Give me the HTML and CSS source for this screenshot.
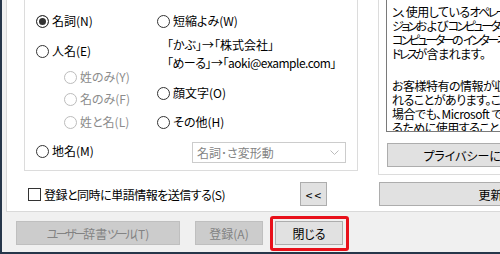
FILE: index.html
```html
<!DOCTYPE html>
<html lang="ja">
<head>
<meta charset="utf-8">
<link rel="stylesheet" href="styles.css">
</head>
<body>
<div class="window">
  <div class="page">
    <div class="left">
      <div class="group">
        <div class="col col-a">
          <div class="opt gap-a1"><span class="radio checked"></span>名詞(N)</div>
          <div class="opt gap-a2"><span class="radio"></span>人名(E)</div>
          <div class="opt sub disabled gap-a3"><span class="radio"></span>姓のみ(Y)</div>
          <div class="opt sub disabled gap-a4"><span class="radio"></span>名のみ(F)</div>
          <div class="opt sub disabled gap-a5"><span class="radio"></span>姓と名(L)</div>
          <div class="opt gap-a6"><span class="radio"></span>地名(M)</div>
        </div>
        <div class="col col-b">
          <div class="opt gap-b1"><span class="radio"></span>短縮よみ(W)</div>
          <div class="example gap-b2">「かぶ」→「株式会社」</div>
          <div class="example tight gap-b3">「めーる」→「aoki@example.com」</div>
          <div class="opt gap-b4"><span class="radio"></span>顔文字(O)</div>
          <div class="opt gap-b5"><span class="radio"></span>その他(H)</div>
          <div class="combo gap-b6">
            <span>名詞･さ変形動</span>
            <svg class="chevron" width="9" height="5" viewBox="0 0 9 5"><polyline points="0.5,0.5 4.5,4.5 8.5,0.5" fill="none" stroke="#bcbcbc" stroke-width="1"/></svg>
          </div>
        </div>
      </div>
      <div class="send-row">
        <div class="check tight"><span class="box"></span>登録と同時に単語情報を送信する(S)</div>
        <button class="btn small">&lt;&lt;</button>
      </div>
    </div>
    <div class="right">
      <div class="info">
        <div class="textbox">
          <p><span class="tk">ン</span>、使用している<span class="tk">オペレーティング システム</span>の<span class="tk">バー</span><br><span class="tk">ジョン</span>および<span class="tk">コンピューター</span>の<span class="tk">ハードウェア</span>、<br><span class="tk">コンピューター</span>の<span class="tk">インターネット プロトコル</span> (IP) <span class="tk">ア</span><br><span class="tk">ドレス</span>が含まれます。</p>
          <p>お客様特有の情報が収集さ<br>れることがあります。このような<br>場合でも、Microsoft ではお客様を特定す<br>るために使用することはありません。</p>
        </div>
        <button class="btn privacy">プライバシーに関する声明</button>
      </div>
      <div class="update-row">
        <button class="btn update">更新(U)</button>
      </div>
    </div>
  </div>
  <div class="footer">
    <button class="btn disabled tool"><span class="kk">ユーザー</span>辞書<span class="kk">ツール</span>(T)</button>
    <button class="btn disabled reg">登録(A)</button>
    <div class="highlight">
      <button class="btn close">閉じる</button>
    </div>
  </div>
</div>
</body>
</html>
```
FILE: styles.css
```css
* {
  box-sizing: border-box;
  margin: 0;
  padding: 0;
}

html, body {
  width: 500px;
  height: 254px;
  overflow: hidden;
}

body {
  background: #f0f0f0;
  font-family: "Noto Sans CJK JP", "Noto Sans", sans-serif;
  font-size: 12px;
  font-feature-settings: "palt";
  color: #000;
}

.window {
  width: 700px;
  height: 254px;
  border-left: 2px solid #26364a;
  border-bottom: 2px solid #26364a;
  display: flex;
  flex-direction: column;
}

.page {
  margin-left: 4px;
  height: 212px;
  flex: none;
  background: #fff;
  border-left: 1px solid #d9d9d9;
  border-bottom: 1px solid #d9d9d9;
  display: flex;
}

.left {
  margin-left: 17px;
  width: 334px;
  flex: none;
}

.group {
  height: 171px;
  border: 1px solid #dcdcdc;
  border-top: none;
  display: flex;
}

.col {
  display: flex;
  flex-direction: column;
}

.col-a {
  width: 132px;
  padding-left: 11px;
}

.opt {
  display: flex;
  align-items: center;
  height: 16px;
  line-height: 16px;
  white-space: nowrap;
}

.radio {
  width: 13px;
  height: 13px;
  flex: none;
  border: 1px solid #333;
  border-radius: 50%;
  background: #fff;
  margin-right: 3px;
}

.radio.checked {
  background: #333;
  box-shadow: inset 0 0 0 2px #fff;
}

.sub {
  margin-left: 28px;
}

.disabled {
  color: #8c8c8c;
}

.disabled .radio {
  border-color: #bcbcbc;
}

.gap-a1 { margin-top: 13px; }
.gap-a2 { margin-top: 14px; }
.gap-a3 { margin-top: 10px; }
.gap-a4 { margin-top: 6px; }
.gap-a5 { margin-top: 7px; }
.gap-a6 { margin-top: 13px; }

.example {
  margin-left: 10px;
  height: 16px;
  line-height: 16px;
  white-space: nowrap;
}

.tight {
  letter-spacing: -0.5px;
}

.gap-b1 { margin-top: 13px; }
.gap-b2 { margin-top: 8px; }
.gap-b3 { margin-top: 2px; }
.gap-b4 { margin-top: 14px; }
.gap-b5 { margin-top: 13px; }
.gap-b6 { margin-top: 12px; }

.combo {
  margin-left: 35px;
  width: 154px;
  height: 21px;
  border: 1px solid #cccccc;
  background: #fff;
  color: #838383;
  display: flex;
  align-items: center;
  justify-content: space-between;
  padding: 0 6px 0 4px;
  white-space: nowrap;
}

.send-row {
  margin-top: 11px;
  height: 24px;
  display: flex;
  align-items: center;
}

.check {
  display: flex;
  align-items: center;
  margin-left: 4px;
  white-space: nowrap;
}

.box {
  width: 13px;
  height: 13px;
  flex: none;
  border: 1px solid #333;
  background: #fff;
  margin-right: 3px;
}

.btn {
  font: inherit;
  font-feature-settings: "palt";
  background: #e1e1e1;
  border: 1px solid #adadad;
  color: #000;
  height: 24px;
  display: flex;
  align-items: center;
  justify-content: center;
  white-space: nowrap;
  flex: none;
}

.btn.disabled {
  background: #cccccc;
  border-color: #bfbfbf;
  color: #838383;
}

.kk {
  letter-spacing: -2.5px;
}

.small {
  width: 27px;
  margin-left: auto;
  margin-right: 31px;
  letter-spacing: 2px;
  padding-left: 2px;
}

.right {
  margin-left: 20px;
  width: 242px;
  flex: none;
}

.info {
  height: 175px;
  border: 1px solid #dcdcdc;
  border-top: none;
}

.textbox {
  margin-left: 7px;
  width: 226px;
  height: 132px;
  border: 1px solid #7a7a7a;
  border-top: none;
  overflow: hidden;
  padding: 5px 0 0 5px;
  line-height: 14px;
  white-space: nowrap;
  letter-spacing: -0.5px;
}

.tk {
  letter-spacing: -2.5px;
}

.textbox p + p {
  margin-top: 18px;
}

.privacy {
  margin-top: 11px;
  margin-left: 8px;
  width: 208px;
}

.update-row {
  margin-top: 7px;
}

.update {
  margin-left: 1px;
  width: 240px;
}

.footer {
  height: 40px;
  display: flex;
  align-items: flex-start;
  padding: 4px 0 0 14px;
}

.tool {
  margin-top: 5px;
  width: 164px;
}

.reg {
  margin-top: 5px;
  margin-left: 15px;
  width: 68px;
}

.highlight {
  margin-left: 7px;
  border: 3px solid #e8101a;
  border-radius: 3px;
  padding: 2px 3px 3px 2px;
}

.close {
  width: 68px;
}
```
